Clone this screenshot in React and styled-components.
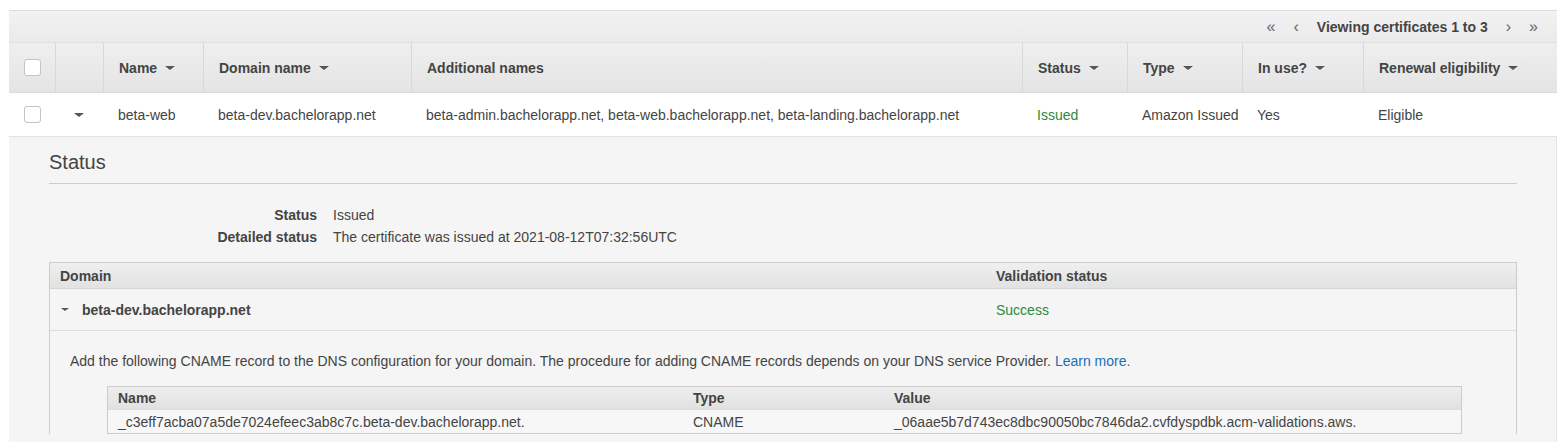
import React from 'react'
import styled, { createGlobalStyle } from 'styled-components'

const GlobalStyle = createGlobalStyle`
  body {
    margin: 0;
    font-family: "Liberation Sans", Arial, sans-serif;
    font-size: 14px;
    color: #444;
    background: #fff;
  }
`

const Page = styled.div`
  padding: 10px 7px 0 9px;
`

const Panel = styled.div`
  border-top: 1px solid #ddd;
`

const Toolbar = styled.div`
  height: 31px;
  display: flex;
  justify-content: flex-end;
  align-items: center;
  padding-right: 10px;
  background: linear-gradient(#f2f2f2, #eaeaea);
  border-bottom: 1px solid #e0e0e0;
`

const PageBtn = styled.span`
  color: #666;
  font-size: 16px;
  padding: 0 9px;
  line-height: 1;
`

const PageLabel = styled.span`
  font-weight: bold;
  color: #444;
  padding: 0 9px;
`

const Grid = styled.div`
  display: grid;
  grid-template-columns: 46px 48px 100px 208px 611px 105px 115px 121px 1fr;
`

const HeadCell = styled.div`
  height: 49px;
  display: flex;
  align-items: center;
  padding-left: ${p => (p.$center ? '0' : '15px')};
  justify-content: ${p => (p.$center ? 'center' : 'flex-start')};
  font-weight: bold;
  background: linear-gradient(#efefef, #e4e4e4);
  border-left: ${p => (p.$first ? 'none' : '1px solid #d8d8d8')};
  border-bottom: 1px solid #dcdcdc;
`

const Cell = styled.div`
  height: 43px;
  display: flex;
  align-items: center;
  padding-left: ${p => (p.$center ? '0' : '15px')};
  justify-content: ${p => (p.$center ? 'center' : 'flex-start')};
  background: #fff;
  border-bottom: 1px solid #e2e2e2;
  color: ${p => p.$color || '#444'};
  white-space: nowrap;
`

const Checkbox = styled.span`
  width: 15px;
  height: 15px;
  border: 1px solid #c4c4c4;
  border-radius: 3px;
  background: #fff;
`

const Caret = styled.span`
  display: inline-block;
  width: 0;
  height: 0;
  border-left: ${p => p.$size || 5}px solid transparent;
  border-right: ${p => p.$size || 5}px solid transparent;
  border-top: ${p => (p.$size || 5) - 1}px solid ${p => p.$color || '#555'};
  margin-left: ${p => p.$gap || '0'};
  margin-right: ${p => p.$after || '0'};
`

const Expanded = styled.div`
  background: #f5f5f5;
  padding: 0 39px 20px 40px;
  border-right: 1px solid #e6e6e6;
`

const SectionTitle = styled.h2`
  margin: 0;
  padding: 13px 0 9px;
  font-size: 20px;
  font-weight: normal;
  color: #444;
  line-height: 24px;
  border-bottom: 1px solid #ccc;
`

const Details = styled.dl`
  display: grid;
  grid-template-columns: 268px 1fr;
  column-gap: 16px;
  margin: 20px 0 14px;
  line-height: 22px;
`

const Term = styled.dt`
  text-align: right;
  font-weight: bold;
`

const Desc = styled.dd`
  margin: 0;
`

const DomainTable = styled.div`
  border: 1px solid #ccc;
  border-bottom: none;
  display: grid;
  grid-template-columns: 936px 1fr;
`

const DomainHead = styled.div`
  height: 25px;
  display: flex;
  align-items: center;
  padding-left: 10px;
  font-weight: bold;
  background: linear-gradient(#efefef, #e2e2e2);
  border-bottom: 1px solid #d6d6d6;
`

const DomainCell = styled.div`
  height: 41px;
  display: flex;
  align-items: center;
  padding-left: 10px;
  font-weight: ${p => (p.$bold ? 'bold' : 'normal')};
  color: ${p => p.$color || '#444'};
  border-bottom: 1px solid #ddd;
`

const DomainBody = styled.div`
  grid-column: 1 / -1;
  padding: 21px 0 0 20px;
`

const Note = styled.p`
  margin: 0 0 16px;
  line-height: 18px;
`

const Link = styled.a`
  color: #1a6fb5;
  text-decoration: none;
`

const RecordTable = styled.div`
  margin-left: 37px;
  width: 1353px;
  border: 1px solid #ccc;
  display: grid;
  grid-template-columns: 575px 201px 1fr;
`

const RecordHead = styled.div`
  height: 22px;
  display: flex;
  align-items: center;
  padding-left: 10px;
  font-weight: bold;
  background: linear-gradient(#eeeeee, #e1e1e1);
`

const RecordCell = styled.div`
  height: 23px;
  display: flex;
  align-items: center;
  padding-left: 10px;
  background: #f7f7f7;
  border-top: 1px solid #ddd;
`

const headers = [
  { label: 'Name', sort: true },
  { label: 'Domain name', sort: true },
  { label: 'Additional names' },
  { label: 'Status', sort: true },
  { label: 'Type', sort: true },
  { label: 'In use?', sort: true },
  { label: 'Renewal eligibility', sort: true },
]

const row = [
  { text: 'beta-web' },
  { text: 'beta-dev.bachelorapp.net' },
  { text: 'beta-admin.bachelorapp.net, beta-web.bachelorapp.net, beta-landing.bachelorapp.net' },
  { text: 'Issued', color: '#2c8a3c' },
  { text: 'Amazon Issued' },
  { text: 'Yes' },
  { text: 'Eligible' },
]

const App = () => {
  return (
    <Page>
      <GlobalStyle />
      <Panel>
        <Toolbar>
          <PageBtn>«</PageBtn>
          <PageBtn>‹</PageBtn>
          <PageLabel>Viewing certificates 1 to 3</PageLabel>
          <PageBtn>›</PageBtn>
          <PageBtn>»</PageBtn>
        </Toolbar>
        <Grid>
          <HeadCell $first $center>
            <Checkbox />
          </HeadCell>
          <HeadCell />
          {headers.map(h => (
            <HeadCell key={h.label}>
              {h.label}
              {h.sort && <Caret $gap="8px" />}
            </HeadCell>
          ))}
          <Cell $center>
            <Checkbox />
          </Cell>
          <Cell $center>
            <Caret />
          </Cell>
          {row.map(c => (
            <Cell key={c.text} $color={c.color}>
              {c.text}
            </Cell>
          ))}
        </Grid>
        <Expanded>
          <SectionTitle>Status</SectionTitle>
          <Details>
            <Term>Status</Term>
            <Desc>Issued</Desc>
            <Term>Detailed status</Term>
            <Desc>The certificate was issued at 2021-08-12T07:32:56UTC</Desc>
          </Details>
          <DomainTable>
            <DomainHead>Domain</DomainHead>
            <DomainHead>Validation status</DomainHead>
            <DomainCell $bold>
              <Caret $size={4} $after="13px" $gap="1px" />
              beta-dev.bachelorapp.net
            </DomainCell>
            <DomainCell $color="#2c8a3c">Success</DomainCell>
            <DomainBody>
              <Note>
                Add the following CNAME record to the DNS configuration for your domain. The procedure for
                adding CNAME records depends on your DNS service Provider. <Link href="#">Learn more.</Link>
              </Note>
              <RecordTable>
                <RecordHead>Name</RecordHead>
                <RecordHead>Type</RecordHead>
                <RecordHead>Value</RecordHead>
                <RecordCell>_c3eff7acba07a5de7024efeec3ab8c7c.beta-dev.bachelorapp.net.</RecordCell>
                <RecordCell>CNAME</RecordCell>
                <RecordCell>_06aae5b7d743ec8dbc90050bc7846da2.cvfdyspdbk.acm-validations.aws.</RecordCell>
              </RecordTable>
            </DomainBody>
          </DomainTable>
        </Expanded>
      </Panel>
    </Page>
  )
}

export default App
